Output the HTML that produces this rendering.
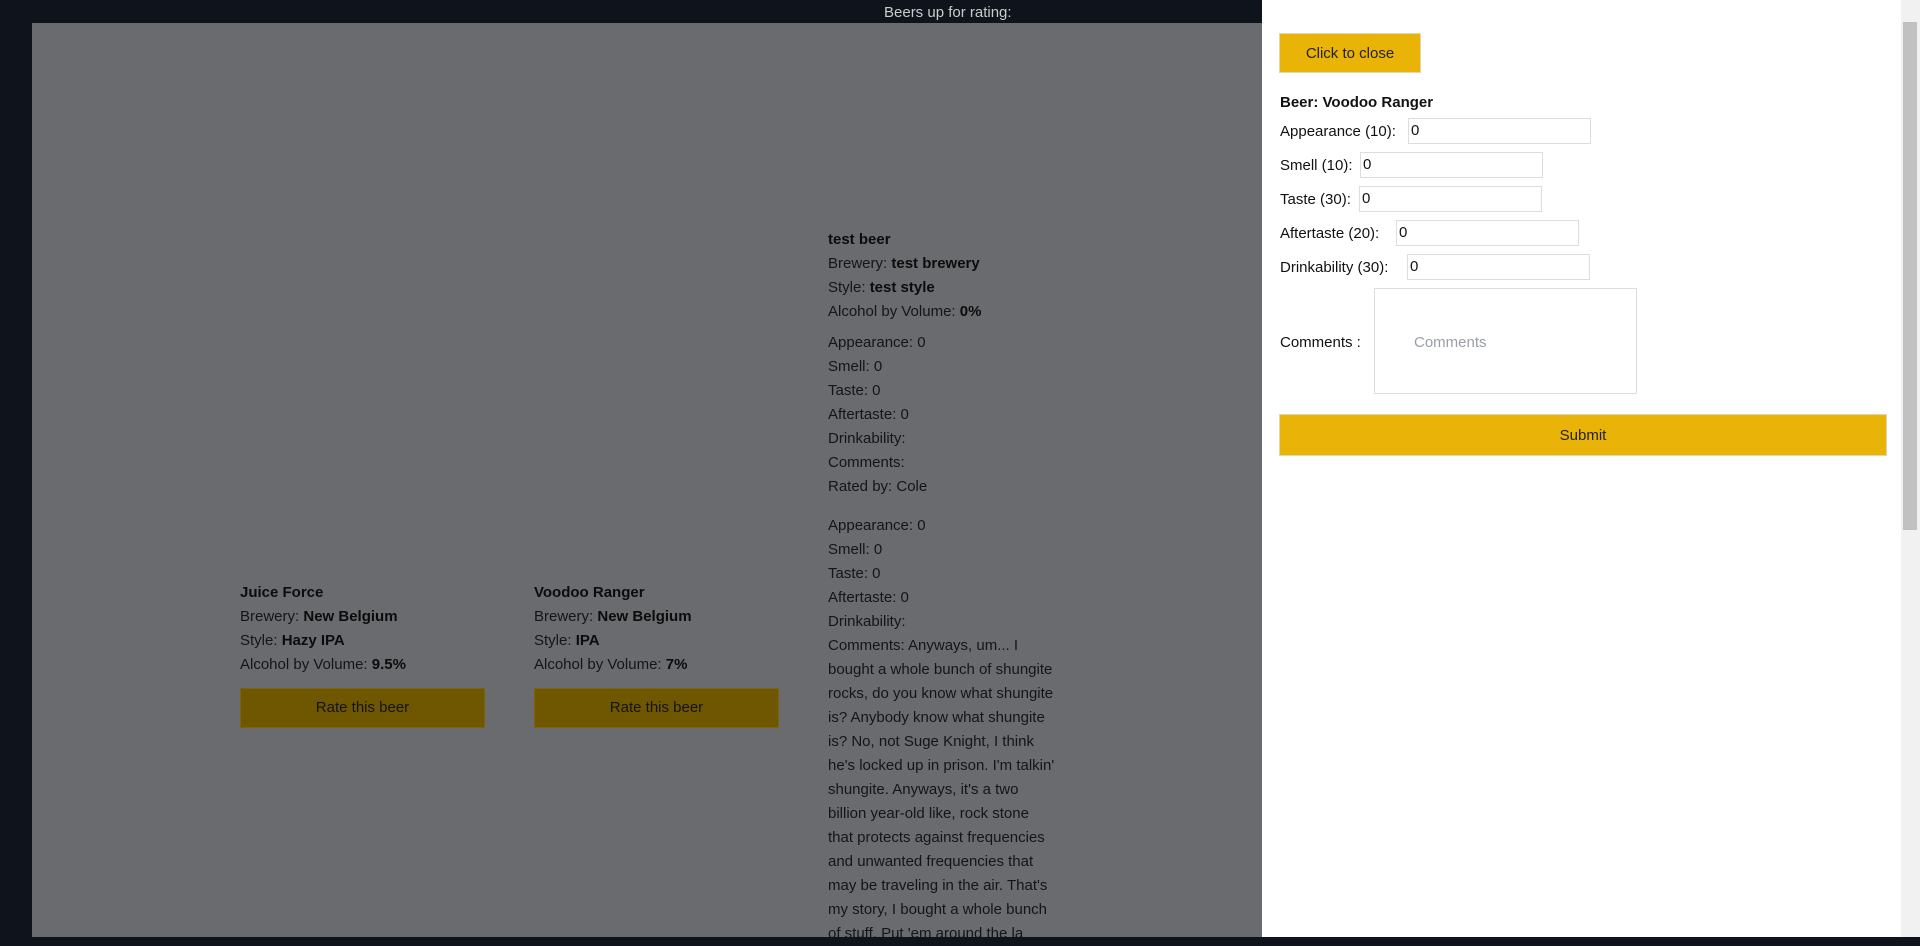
<!DOCTYPE html>
<html><head><style>
*{margin:0;padding:0;box-sizing:border-box}
body{width:1920px;height:937px;overflow:hidden;background:#0f141c;font-family:"Liberation Sans",sans-serif;font-size:15px;position:relative;color:#111}
.hdr{position:absolute;top:0;left:0;width:1262px;height:23px;color:#c9cacc;font-size:15px}
.hdr span{position:absolute;left:884px;top:3px;line-height:20px}
.main{position:absolute;left:32px;top:23px;width:1230px;height:914px;background:#6a6b6f}
.col{position:absolute;line-height:24px;white-space:nowrap;color:#141516}
.col b{font-weight:bold;color:#0c0c0c}
.btn{position:absolute;width:245px;height:40px;background:#6f5701;border:1px solid #7d6408;text-align:center;line-height:38px;color:#141414}
.panel{position:absolute;left:1262px;top:0;width:639px;height:937px;background:#fff;color:#000}
.p{position:absolute;white-space:nowrap;font-size:15px;line-height:20px}
.in{position:absolute;height:26px;border:1px solid #ddd;padding-left:2px;line-height:24px;font-size:15px}
.sb{position:absolute;left:1901px;top:0;width:19px;height:937px;background:#f1f1f1}
.th{position:absolute;left:2px;top:22px;width:14px;height:508px;background:#c1c1c1}
</style></head><body>
<div class="hdr"><span>Beers up for rating:</span></div>
<div class="main"></div>
<div class="col" style="left:240px;top:581px"><b>Juice Force</b><br>Brewery: <b>New Belgium</b><br>Style: <b>Hazy IPA</b><br>Alcohol by Volume: <b>9.5%</b></div>
<div class="btn" style="left:240px;top:688px">Rate this beer</div>
<div class="col" style="left:534px;top:581px"><b>Voodoo Ranger</b><br>Brewery: <b>New Belgium</b><br>Style: <b>IPA</b><br>Alcohol by Volume: <b>7%</b></div>
<div class="btn" style="left:534px;top:688px">Rate this beer</div>
<div class="col" style="left:828px;top:228px"><b>test beer</b><br>Brewery: <b>test brewery</b><br>Style: <b>test style</b><br>Alcohol by Volume: <b>0%</b>
<div style="margin-top:7px">Appearance: 0<br>Smell: 0<br>Taste: 0<br>Aftertaste: 0<br>Drinkability:<br>Comments:<br>Rated by: Cole</div>
<div style="margin-top:15px">Appearance: 0<br>Smell: 0<br>Taste: 0<br>Aftertaste: 0<br>Drinkability:<br>Comments: Anyways, um... I<br>bought a whole bunch of shungite<br>rocks, do you know what shungite<br>is? Anybody know what shungite<br>is? No, not Suge Knight, I think<br>he's locked up in prison. I'm talkin'<br>shungite. Anyways, it's a two<br>billion year-old like, rock stone<br>that protects against frequencies<br>and unwanted frequencies that<br>may be traveling in the air. That's<br>my story, I bought a whole bunch<br>of stuff. Put 'em around the la</div></div>
<div class="panel"></div>
<div style="position:absolute;left:1279px;top:33px;width:142px;height:40px;background:#e9b308;border:1px solid #e0d6b0;text-align:center;line-height:40px;font-size:15px;color:#222">Click to close</div>
<div class="p" style="left:1280px;top:93px;font-weight:bold">Beer: Voodoo Ranger</div>
<div class="p" style="left:1280px;top:122px">Appearance (10):</div><div class="in" style="left:1408px;top:118px;width:183px">0</div>
<div class="p" style="left:1280px;top:156px">Smell (10):</div><div class="in" style="left:1360px;top:152px;width:183px">0</div>
<div class="p" style="left:1280px;top:190px">Taste (30):</div><div class="in" style="left:1359px;top:186px;width:183px">0</div>
<div class="p" style="left:1280px;top:224px">Aftertaste (20):</div><div class="in" style="left:1396px;top:220px;width:183px">0</div>
<div class="p" style="left:1280px;top:258px">Drinkability (30):</div><div class="in" style="left:1407px;top:254px;width:183px">0</div>
<div class="p" style="left:1280px;top:333px">Comments :</div>
<div style="position:absolute;left:1374px;top:288px;width:263px;height:106px;border:1px solid #ddd"></div>
<div class="p" style="left:1414px;top:333px;color:#9a9ea6">Comments</div>
<div style="position:absolute;left:1279px;top:414px;width:608px;height:42px;background:#e9b308;border:1px solid #e0d6b0;text-align:center;line-height:42px;font-size:15px;color:#222">Submit</div>
<div class="sb"><div class="th"></div></div>
</body></html>
